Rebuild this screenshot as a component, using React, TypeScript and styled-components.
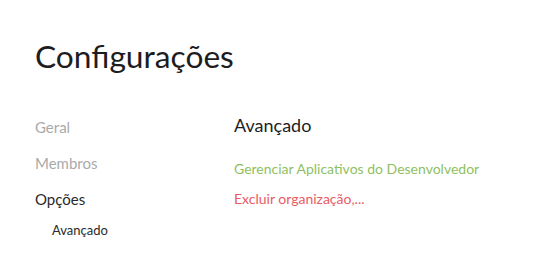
import React from "react";
import styled, { createGlobalStyle } from "styled-components";

const Global = createGlobalStyle`
  html, body { margin: 0; padding: 0; background: #fff; }
  body { font-family: Lato, "Open Sans", sans-serif; color: #222; }
`;

const Page = styled.div`
  padding: 34px 35px 0;
`;

const Title = styled.h1`
  margin: 0;
  font-size: 31.7px;
  font-weight: 400;
  line-height: 44px;
  color: #1d1d1f;
`;

const Body = styled.div`
  display: grid;
  grid-template-columns: 199px 1fr;
  margin-top: 31px;
`;

const Nav = styled.nav`
  display: flex;
  flex-direction: column;
`;

const NavItem = styled.div<{ $active?: boolean }>`
  font-size: 15px;
  line-height: 36px;
  color: ${(p) => (p.$active ? "#2a2a2a" : "#aaaaaa")};
`;

const SubItem = styled.div`
  font-size: 13px;
  line-height: 26px;
  padding-left: 17px;
  color: #2a2a2a;
`;

const Main = styled.div`
  display: flex;
  flex-direction: column;
`;

const Heading = styled.h2`
  margin: 0;
  font-size: 18px;
  font-weight: 400;
  line-height: 32px;
  color: #1d1d1f;
`;

const Action = styled.div<{ $tone: "green" | "red" }>`
  font-size: 14px;
  line-height: 30px;
  color: ${(p) => (p.$tone === "green" ? "#8fbf5f" : "#e85c62")};
`;

const Actions = styled.div`
  margin-top: 13px;
  display: flex;
  flex-direction: column;
`;

export default function App() {
  return (
    <>
      <Global />
      <Page>
        <Title>Configurações</Title>
        <Body>
          <Nav>
            <NavItem>Geral</NavItem>
            <NavItem>Membros</NavItem>
            <NavItem $active>Opções</NavItem>
            <SubItem>Avançado</SubItem>
          </Nav>
          <Main>
            <Heading>Avançado</Heading>
            <Actions>
              <Action $tone="green">Gerenciar Aplicativos do Desenvolvedor</Action>
              <Action $tone="red">Excluir organização,...</Action>
            </Actions>
          </Main>
        </Body>
      </Page>
    </>
  );
}
